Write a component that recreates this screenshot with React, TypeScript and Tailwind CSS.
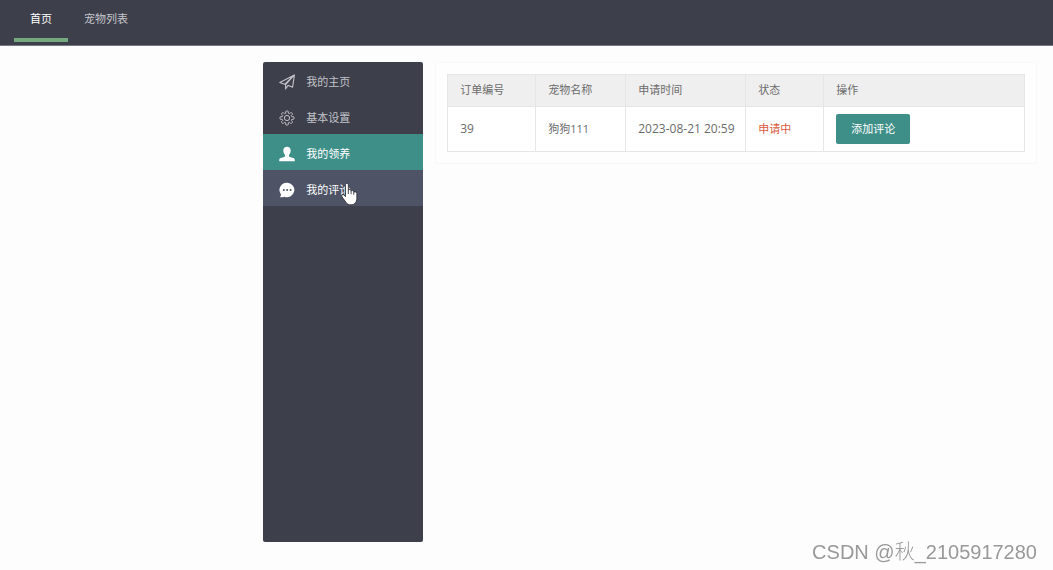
import React from "react";

type IconProps = { className?: string };

function PlaneIcon({ className }: IconProps) {
  return (
    <svg className={className} viewBox="0 0 16 16" fill="none" stroke="currentColor" strokeWidth="1.1" strokeLinejoin="round" aria-hidden="true">
      <path d="M15.400 1 .8 8.600l4.800 1.700L15.400 1ZM15.400 1l-1.800 12.200-4.800-2M15.400 1 6.600 10.600V15l2.400-3.600" />
    </svg>
  );
}

function GearIcon({ className }: IconProps) {
  return (
    <svg className={className} viewBox="0 0 16 16" fill="none" stroke="currentColor" strokeWidth="1" strokeLinejoin="round" aria-hidden="true">
      <path d="M6.700 3.200V1.800q0-.8.8-.8h1q.8 0 .8.800v1.400l1.200.5 1-1q.5-.5 1 0l.8.8q.5.500 0 1l-1 1 .5 1.200h1.400q.8 0 .8.800v1q0 .8-.8.8h-1.400l-.5 1.200 1 1q.5.500 0 1l-.8.800q-.5.500-1 0l-1-1-1.200.5v1.400q0 .8-.8.800h-1q-.8 0-.8-.8v-1.400l-1.200-.5-1 1q-.5.500-1 0l-.8-.8q-.5-.5 0-1l1-1-.5-1.200H1.800Q1 9.300 1 8.500v-1q0-.8.800-.8h1.400l.5-1.200-1-1q-.5-.5 0-1l.8-.8q.5-.5 1 0l1 1Z" />
      <circle cx="8" cy="8" r="2.600" />
    </svg>
  );
}

function PersonIcon({ className }: IconProps) {
  return (
    <svg className={className} viewBox="0 0 16 16" fill="currentColor" aria-hidden="true">
      <path d="M8 .8c2.300 0 3.700 1.500 3.700 3.800 0 1.800-.8 3.300-1.700 4.200v1.200c0 .6.3.9.9 1.100l3.200 1c1.200.4 1.700 1 1.700 2.400v.7H.2v-.7c0-1.400.5-2 1.700-2.400l3.200-1c.6-.2.900-.5.900-1.100V8.800C5.100 7.900 4.300 6.400 4.300 4.600 4.300 2.300 5.700.8 8 .8Z" />
    </svg>
  );
}

function ChatIcon({ className }: IconProps) {
  return (
    <svg className={className} viewBox="0 0 16 16" aria-hidden="true">
      <path fill="currentColor" d="M8.200.8a7.200 7.200 0 1 1-2.700 13.900c-1.300.5-2.900.7-4.700.5.800-.7 1.200-1.600 1.200-2.800A7.200 7.200 0 0 1 8.200.8Z" />
      <g fill="#4e5366">
        <circle cx="4.800" cy="8" r="1" />
        <circle cx="8.200" cy="8" r="1" />
        <circle cx="11.600" cy="8" r="1" />
      </g>
    </svg>
  );
}

function HandPointer({ className }: IconProps) {
  return (
    <svg className={className} viewBox="0 0 16 22" aria-hidden="true">
      <path
        d="M4.200 2.200C4.200.4 6.900.4 6.900 2.200v5.600c.1-1.400 2.500-1.300 2.600.2v.5c.3-1.200 2.400-1 2.500.5v.6c.4-1 2.900-.8 2.900 1v4.600c0 2-.6 3.300-1.800 4.500-1 1-2 1.500-3.800 1.500-2.200 0-3.600-.8-4.500-2.200L.9 13.600c-.9-1.700 1.100-2.700 2.200-1.400l1.100 1.300Z"
        fill="#fff"
        stroke="#2c2e39"
        strokeWidth=".8"
        strokeLinejoin="round"
      />
      <path d="M6.900 8v3M9.500 8.500v2.700M12 9.600v2.200" stroke="#2c2e39" strokeWidth=".8" />
    </svg>
  );
}

const menu = [
  { label: "我的主页", Icon: PlaneIcon, style: "text-[#c2c3c9]" },
  { label: "基本设置", Icon: GearIcon, style: "text-[#c2c3c9]" },
  { label: "我的领养", Icon: PersonIcon, style: "bg-[#3f8f89] text-white" },
  { label: "我的评论", Icon: ChatIcon, style: "bg-[#4e5366] text-white", pointer: true },
];

const cell = "border border-[#e6e6e6] px-3 text-left font-normal";

export default function App() {
  return (
    <div className="min-h-screen bg-[#fdfdfd] font-['Open_Sans','Noto_Sans_CJK_SC',sans-serif] text-[11px] text-[#6c6c6c]">
      <header className="h-[46px] border-b border-[#777984] bg-[#3d3f4b] px-3.5">
        <nav className="flex h-full">
          <a href="#home" className="flex h-[42px] items-center border-b-4 border-[#74a97f] px-4 text-white">
            首页
          </a>
          <a href="#pets" className="flex h-[42px] items-center border-b-4 border-transparent px-4 text-[#c5c6cc]">
            宠物列表
          </a>
        </nav>
      </header>

      <div className="flex items-start gap-3 pt-4 pr-4 pl-[25%]">
        <nav className="min-h-[480px] w-40 shrink-0 overflow-hidden rounded-xs bg-[#3d3f4b]">
          <ul>
            {menu.map(({ label, Icon, style, pointer }) => (
              <li key={label} className="relative">
                <a href="#menu" className={"flex h-9 items-center gap-[11px] px-4 pt-1 " + style}>
                  <Icon className="size-4" />
                  <span>{label}</span>
                </a>
                {pointer && <HandPointer className="absolute top-3 left-[78px] h-6 w-[17px]" />}
              </li>
            ))}
          </ul>
        </nav>

        <main className="min-w-0 grow border border-[#f8f8f8] bg-[#fefefe] p-[11px]">
          <table className="w-full table-fixed border-collapse bg-white">
            <colgroup>
              <col className="w-[88px]" />
              <col className="w-[90px]" />
              <col className="w-[120px]" />
              <col className="w-[78px]" />
              <col />
            </colgroup>
            <thead>
              <tr className="h-8 bg-[#efefef]">
                <th scope="col" className={cell}>订单编号</th>
                <th scope="col" className={cell}>宠物名称</th>
                <th scope="col" className={cell}>申请时间</th>
                <th scope="col" className={cell}>状态</th>
                <th scope="col" className={cell}>操作</th>
              </tr>
            </thead>
            <tbody>
              <tr className="h-[45px]">
                <td className={cell + " text-xs"}>39</td>
                <td className={cell}>狗狗111</td>
                <td className={cell + " whitespace-nowrap text-xs"}>2023-08-21 20:59</td>
                <td className={cell + " text-[#d9593d]"}>申请中</td>
                <td className={cell}>
                  <button type="button" className="block h-[30px] rounded-xs bg-[#3f8f89] px-[15px] text-white">
                    添加评论
                  </button>
                </td>
              </tr>
            </tbody>
          </table>
        </main>
      </div>

      <p className="fixed right-4 bottom-1 font-['Liberation_Sans','Noto_Sans_CJK_SC',sans-serif] text-[20px] leading-7 font-light text-[#999]">
        CSDN @秋_2105917280
      </p>
    </div>
  );
}
